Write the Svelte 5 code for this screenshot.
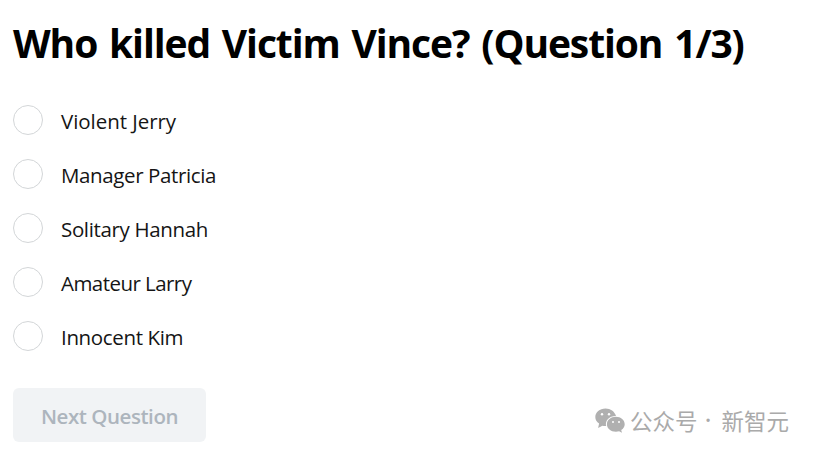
<script>
  const options = [
    { name: 'Violent Jerry', spacing: -0.05 },
    { name: 'Manager Patricia', spacing: -0.38 },
    { name: 'Solitary Hannah', spacing: -0.35 },
    { name: 'Amateur Larry', spacing: -0.55 },
    { name: 'Innocent Kim', spacing: -0.35 }
  ];
  let selected = $state('');
</script>

<main>
  <h1>Who killed Victim Vince? (Question 1/3)</h1>
  <div class="options">
    {#each options as option}
      <label>
        <input type="radio" name="suspect" value={option.name} bind:group={selected} />
        <span style="letter-spacing: {option.spacing}px">{option.name}</span>
      </label>
    {/each}
  </div>
  <footer>
    <button disabled={!selected}><span>Next Question</span></button>
    <div class="account">
      <svg width="31" height="26" viewBox="0 0 31 26" aria-hidden="true">
        <path fill="#b0b0b0" d="M10.500 0.500C4.700 0.500 0.300 4.200 0.300 9c0 2.800 1.400 5 3.800 6.600L3.100 20l4.300-2.300c1.300.3 2.400.4 3.800.3-1.500-5.500 3.300-10.300 9.800-10.100C19.600 3.500 15.500 .5 10.500 .5Z" />
        <path fill="#b0b0b0" d="M20.900 8.800c-5.100 0-9 3.300-9 7.400s3.900 7.500 9 7.500c1.100 0 2.200-.2 3.200-.5l2.900 1.600-.8-2.700c2.200-1.500 3.500-3.500 3.500-5.900 0-4.100-3.900-7.400-8.800-7.400Z" />
        <g fill="#fff">
          <circle cx="7" cy="6.200" r="1.200" /><circle cx="14" cy="6.200" r="1.200" />
          <circle cx="18" cy="14" r="1" /><circle cx="24" cy="14" r="1" />
        </g>
      </svg>
      <span class="label">公众号</span><span class="dot">·</span><span class="label">新智元</span>
    </div>
  </footer>
</main>

<style>
  :global(body) { background: #fff; }
  main {
    box-sizing: border-box;
    height: 454px;
    padding: 17px 26px 0 13px;
    font-family: "Open Sans", "Noto Sans", sans-serif;
    color: #000;
  }
  h1 {
    margin: 0;
    font-size: 39px;
    line-height: 52px;
    font-weight: 700;
    letter-spacing: -1.100px;
    word-spacing: 2.800px;
    white-space: nowrap;
  }
  .options {
    display: flex;
    flex-direction: column;
    gap: 24px;
    padding-top: 36px;
  }
  label {
    display: flex;
    height: 30px;
    gap: 18px;
    font-size: 20.500px;
    line-height: 32px;
    color: #151515;
    white-space: nowrap;
  }
  input {
    appearance: none;
    box-sizing: border-box;
    width: 30px;
    height: 30px;
    margin: 0;
    border: 1px solid #d3d6d8;
    border-radius: 50%;
  }
  footer {
    display: flex;
    justify-content: space-between;
    margin-top: 37px;
  }
  button {
    width: 193px;
    height: 54px;
    padding: 2px 0 0;
    border: 0;
    border-radius: 6px;
    background: #f1f3f5;
    color: #adb5bd;
    font: 600 20.500px "Open Sans", "Noto Sans", sans-serif;
    letter-spacing: -0.450px;
    white-space: nowrap;
  }
  .account {
    display: flex;
    align-items: center;
    height: 30px;
    margin-top: 18px;
    color: #aaa;
    font: 22.500px/30px "Noto Sans CJK SC", sans-serif;
  }
  svg { margin-right: 4px; }
  .account { transform: translateX(-1px); }
  .label { position: relative; top: -1px; }
  .dot { width: 24px; padding-right: 3px; box-sizing: border-box; text-align: center; font-family: "Open Sans", sans-serif; font-weight: 600; }
</style>
